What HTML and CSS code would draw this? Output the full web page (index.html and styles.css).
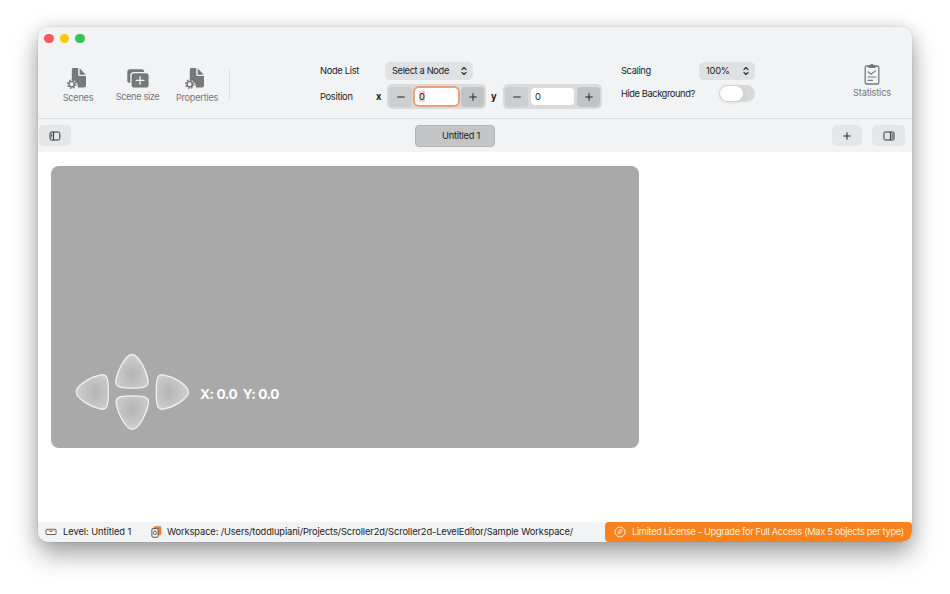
FILE: index.html
```html
<!DOCTYPE html>
<html lang="en">
<head>
    <meta charset="UTF-8">
    <meta name="viewport" content="width=device-width, initial-scale=1.0">
    <title>Untitled 1</title>
    <link rel="stylesheet" href="styles.css">
</head>
<body>
    <svg width="0" height="0" class="defs">
        <defs>
            <symbol id="doc-gear" viewBox="0 0 20 21">
                <path d="M6.500 0h4.700v6.600c0 .9.600 1.500 1.500 1.500H19v9.400c0 1.200-.8 2-2 2H10.800c.3-3.800-2.200-7-6-7.400V1.700C4.800.700 5.500 0 6.500 0z"/>
                <path d="M12.600.3l6.100 6.400h-6.100z"/>
                <circle cx="4.700" cy="16.200" r="2.700" fill="none" stroke="currentColor" stroke-width="1.700"/>
                <circle cx="4.700" cy="16.200" r="4.100" fill="none" stroke="currentColor" stroke-width="1.300" stroke-dasharray="1.610 1.610"/>
            </symbol>
            <symbol id="chevrons" viewBox="0 0 8 10">
                <path d="M1.900 3.600L4 1.500l2.100 2.100M1.900 6.400L4 8.500l2.100-2.100" fill="none" stroke="currentColor" stroke-width="1.100" stroke-linecap="round" stroke-linejoin="round"/>
            </symbol>
            <symbol id="minus" viewBox="0 0 10 10">
                <path d="M1.300 5h7.400" stroke="currentColor" stroke-width="1"/>
            </symbol>
            <symbol id="plus" viewBox="0 0 10 10">
                <path d="M1.300 5h7.400M5 1.300v7.400" stroke="currentColor" stroke-width="1"/>
            </symbol>
        </defs>
    </svg>

    <div class="window">
        <div class="titlebar">
            <span class="dot red"></span>
            <span class="dot yellow"></span>
            <span class="dot green"></span>
        </div>

        <div class="toolbar">
            <div class="tools">
                <div class="tool scenes">
                    <svg width="20" height="21"><use href="#doc-gear"/></svg>
                    <span>Scenes</span>
                </div>
                <div class="tool scene-size">
                    <svg width="22" height="19" viewBox="0 0 22 19">
                        <path d="M.3 12V3C.3 1.300 1.300.300 3 .3h11.500c1.700 0 2.600.9 2.800 2.600H7C4.600 2.900 3.300 4.200 3.300 6.600v7.300C1.300 13.900.3 13.200.3 12z"/>
                        <rect x="4.600" y="4.200" width="17" height="14.400" rx="2.600"/>
                        <path d="M13.100 7.600v7.600M9.300 11.400h7.600" stroke="#f2f3f5" stroke-width="1.300" stroke-linecap="round"/>
                    </svg>
                    <span>Scene size</span>
                </div>
                <div class="tool properties">
                    <svg width="20" height="21"><use href="#doc-gear"/></svg>
                    <span>Properties</span>
                </div>
            </div>
            <div class="separator"></div>

            <div class="form node-form">
                <div class="row">
                    <span class="label">Node List</span>
                    <div class="select">Select a Node <svg width="8" height="10"><use href="#chevrons"/></svg></div>
                </div>
                <div class="row position-row">
                    <span class="label">Position</span>
                    <span class="axis">x</span>
                    <div class="stepper">
                        <span class="step"><svg width="10" height="10"><use href="#minus"/></svg></span>
                        <span class="field focused"><mark>0</mark></span>
                        <span class="step up"><svg width="10" height="10"><use href="#plus"/></svg></span>
                    </div>
                    <span class="axis">y</span>
                    <div class="stepper">
                        <span class="step"><svg width="10" height="10"><use href="#minus"/></svg></span>
                        <span class="field">0</span>
                        <span class="step up"><svg width="10" height="10"><use href="#plus"/></svg></span>
                    </div>
                </div>
            </div>

            <div class="form view-form">
                <div class="row">
                    <span class="label">Scaling</span>
                    <div class="select">100% <svg width="8" height="10"><use href="#chevrons"/></svg></div>
                </div>
                <div class="row">
                    <span class="label wide">Hide Background?</span>
                    <div class="toggle"><span class="knob"></span></div>
                </div>
            </div>

            <div class="tool statistics">
                <svg width="16" height="22" viewBox="0 0 16 22" fill="none" stroke="currentColor" stroke-width="1.300" stroke-linecap="round" stroke-linejoin="round">
                    <rect x="1.200" y="3" width="13.600" height="18" rx="1.600"/>
                    <path d="M4.900 4.300V2.700h1.700a1.500 1.500 0 0 1 2.800 0h1.700v1.600z" fill="currentColor"/>
                    <path d="M4 8.800l3 2.400 4.600-3.300M4 14h8M4 17.400h4.600" stroke-width="1.100"/>
                </svg>
                <span>Statistics</span>
            </div>
        </div>

        <div class="tabbar">
            <div class="button sidebar">
                <svg width="12" height="10" viewBox="0 0 12 10" fill="none" stroke="currentColor" stroke-width=".9">
                    <rect x="1" y="1" width="9.800" height="8" rx="1.500"/>
                    <path d="M4.500 1v8M2.100 3h1.200M2.100 4.500h1.200M2.100 6h1.200"/>
                </svg>
            </div>
            <div class="tab">Untitled 1</div>
            <div class="actions">
                <div class="button add"><svg width="10" height="10"><use href="#plus"/></svg></div>
                <div class="button inspector">
                    <svg width="12" height="10" viewBox="0 0 12 10" fill="none" stroke="currentColor" stroke-width=".9">
                        <rect x="1" y="1" width="10" height="8" rx="1.300"/>
                        <path d="M7.400 1v8"/>
                        <path d="M8.400 3h1.700M8.400 5h1.700M8.400 7h1.700" stroke-width="1.200"/>
                    </svg>
                </div>
            </div>
        </div>

        <div class="content">
            <div class="scene">
                <svg class="dpad" width="116" height="78" viewBox="0 0 116 78">
                    <defs>
                        <radialGradient id="pad" cx=".5" cy=".6" r=".62">
                            <stop offset="0" stop-color="#b4b4b4"/>
                            <stop offset="1" stop-color="#d0d0d0"/>
                        </radialGradient>
                        <path id="arrow" d="M0-16.800C3.600-16.800 6.800-12.700 10-7.400C13-2.200 15.200 3.500 16.100 9C16.800 13.500 15 15.200 11 16C6 17-6 17-11 16C-15 15.200-16.800 13.500-16.100 9C-15.200 3.500-13-2.200-10-7.400C-6.800-12.700-3.600-16.800 0-16.800z"/>
                    </defs>
                    <g fill="url(#pad)" stroke="#f1f1f1" stroke-width="1.300">
                        <use href="#arrow" transform="translate(58 18.300)"/>
                        <use href="#arrow" transform="translate(58.300 59.600) rotate(180)"/>
                        <use href="#arrow" transform="translate(18.300 39) rotate(-90) scale(1.060 .96)"/>
                        <use href="#arrow" transform="translate(98.300 39) rotate(90) scale(1.060 .96)"/>
                    </g>
                </svg>
                <span class="coords">X: 0.0&nbsp; Y: 0.0</span>
            </div>
        </div>

        <div class="statusbar">
            <svg class="level-icon" width="12" height="8" viewBox="0 0 12 8">
                <rect x="1" y="1.300" width="10" height="5.200" rx=".8" fill="#fff" stroke="#4b4b4b" stroke-width=".9"/>
                <path d="M1.500 2h9" stroke="#e98b3c" stroke-width=".9"/>
                <path d="M4.500 3.300h3" stroke="#4b4b4b" stroke-width="1"/>
            </svg>
            <span class="level">Level: Untitled 1</span>
            <svg class="workspace-icon" width="11" height="12" viewBox="0 0 11 12">
                <rect x="3" y=".3" width="7.300" height="9" rx="1.200" fill="#f28128"/>
                <rect x=".9" y="2.400" width="6.200" height="8.900" rx="1.200" fill="#f4f3f2" stroke="#444" stroke-width=".9"/>
                <circle cx="4" cy="7" r="1.600" fill="none" stroke="#555" stroke-width=".8"/>
                <path d="M2.500 4.300h2.400" stroke="#777" stroke-width=".6"/>
            </svg>
            <span class="path">Workspace: /Users/toddlupiani/Projects/Scroller2d/Scroller2d-LevelEditor/Sample Workspace/</span>
            <div class="license">
                <svg width="12" height="12" viewBox="0 0 12 12" fill="none" stroke="#fff0d8" stroke-width="1">
                    <circle cx="6" cy="6" r="5"/>
                    <path d="M4 8.800L4.300 5.500C5 4 6.400 3.500 8 3.300C8 5 7.500 6.600 6.200 7.400L4.800 7.500L7 4.600" stroke-width=".8"/>
                </svg>
                <span>Limited License - Upgrade for Full Access (Max 5 objects per type)</span>
            </div>
        </div>
    </div>
</body>
</html>
```
FILE: styles.css
```css
* {
    box-sizing: border-box;
}

body {
    margin: 0;
    height: 594px;
    padding: 27px 38px 0;
    overflow: hidden;
    background: #fff;
    font-family: Inter, "Liberation Sans", sans-serif;
    font-size: 9.3px;
    line-height: 12px;
    letter-spacing: -0.11px;
    color: #222;
}

svg {
    display: block;
    flex: none;
}

.defs {
    position: absolute;
}

.window {
    display: flex;
    flex-direction: column;
    width: 874px;
    height: 515px;
    border-radius: 10px;
    background: #fff;
    overflow: hidden;
    white-space: nowrap;
    box-shadow: 0 0 1px rgba(0,0,0,0.35), 0 0 16px rgba(0,0,0,0.1), 0 12px 26px rgba(0,0,0,0.36);
}

.titlebar {
    display: flex;
    gap: 6px;
    height: 32px;
    padding: 6.5px 0 0 6px;
    background: #f2f3f5;
}

.dot {
    width: 9.6px;
    height: 9.6px;
    border-radius: 50%;
}

.red { background: #fb5a5c; }
.yellow { background: #f9c60c; }
.green { background: #31c456; }

.toolbar {
    display: flex;
    height: 60px;
    background: #f2f3f5;
    border-bottom: 1px solid #dfe0e2;
}

.tools {
    display: flex;
    padding-left: 15px;
}

.tool {
    display: flex;
    flex-direction: column;
    align-items: center;
    color: #77787a;
    fill: currentColor;
    font-size: 9.2px;
    letter-spacing: -0.25px;
}

.scenes,
.properties {
    width: 50px;
    padding-top: 9px;
    gap: 3px;
}

.scenes svg {
    margin-right: 2px;
}

.properties svg {
    margin-right: 4px;
}

.scene-size {
    width: 69px;
    padding-top: 10px;
    gap: 3px;
    letter-spacing: -0.35px;
}

.separator {
    width: 1px;
    height: 30px;
    margin: 11px 0 0 7px;
    background: #dcdddf;
}

.form {
    display: flex;
    flex-direction: column;
    letter-spacing: -0.35px;
}

.node-form {
    width: 282px;
    margin-left: 90px;
    padding-top: 3px;
    gap: 4px;
}

.row {
    display: flex;
    align-items: center;
}

.label {
    width: 65px;
}

.node-form .label {
    letter-spacing: -0.3px;
}

.node-form .position-row .label {
    width: 56px;
    letter-spacing: -0.3px;
}

.select {
    display: flex;
    align-items: center;
    justify-content: space-between;
    width: 88px;
    height: 18px;
    padding: 0 5px 0 7px;
    border-radius: 5px;
    background: #e0e1e3;
}

.axis {
    width: 11px;
    font-weight: 700;
}

.stepper {
    display: flex;
    align-items: center;
    gap: 3px;
    width: 99px;
    height: 25px;
    padding: 2px;
    border-radius: 5px;
    background: #d9dadc;
}

.stepper + .axis {
    width: 12px;
    margin-left: 5px;
}

.step {
    display: flex;
    align-items: center;
    justify-content: center;
    width: 23px;
    height: 20px;
    border-radius: 4px;
    background: #cdced0;
}

.step.up {
    background: #c2c3c5;
}

.field {
    width: 43px;
    height: 17px;
    padding: 3px 4px;
    border-radius: 4px;
    background: #fff;
}

.focused {
    box-shadow: 0 0 0 2px #e4a27b;
}

mark {
    background: #f8d6bd;
    color: inherit;
}

.view-form {
    width: 134px;
    margin-left: 19px;
    padding-top: 3px;
    gap: 5px;
}

.view-form .label {
    width: 78px;
}

.view-form .select {
    width: 56px;
    letter-spacing: -0.25px;
}

.view-form .label.wide {
    width: 98px;
    letter-spacing: -0.42px;
}

.toggle {
    width: 36px;
    height: 17px;
    padding: 1px;
    border-radius: 9px;
    background: #d8d9db;
}

.knob {
    display: block;
    width: 23px;
    height: 15px;
    border-radius: 8px;
    background: #fff;
    box-shadow: 0 1px 5px rgba(0,0,0,0.1);
}

.statistics {
    margin: 4px 21px 0 auto;
    gap: 2px;
    letter-spacing: -0.15px;
}

.tabbar {
    display: flex;
    align-items: center;
    height: 33px;
    padding: 0 7px 0 1px;
    background: #f2f3f5;
}

.button {
    display: flex;
    align-items: center;
    justify-content: center;
    width: 33px;
    height: 21px;
    border-radius: 5px;
    background: #e5e6e7;
}

.sidebar {
    width: 32px;
}

.tab {
    width: 80px;
    height: 22px;
    margin-left: 344px;
    padding: 4px 0 0 26px;
    border: 1px solid #b2b3b5;
    border-radius: 4px;
    background: #c4c5c7;
    letter-spacing: -0.25px;
}

.actions {
    display: flex;
    gap: 10px;
    margin-left: auto;
}

.add {
    width: 30px;
}

.content {
    flex: 1;
    padding: 14px 13px;
}

.scene {
    display: flex;
    align-items: flex-start;
    width: 588px;
    height: 282px;
    padding: 187px 0 0 23px;
    border-radius: 8px;
    background: #a9a9a9;
}

.coords {
    margin: 32px 0 0 10px;
    font-size: 13.6px;
    font-weight: 700;
    line-height: 18px;
    letter-spacing: -0.45px;
    color: #fff;
}

.statusbar {
    display: flex;
    align-items: center;
    height: 20px;
    padding-left: 7px;
    background: #f2f3f5;
}

.level {
    width: 82px;
    margin-left: 6px;
    letter-spacing: -0.04px;
}

.workspace-icon {
    margin-left: 6px;
}

.path {
    margin-left: 5px;
}

.license {
    display: flex;
    align-items: center;
    gap: 6px;
    width: 307px;
    height: 20px;
    margin-left: auto;
    padding-left: 9px;
    border-radius: 4px 4px 10px 4px;
    background: #f8821e;
    color: #fff0d8;
    letter-spacing: -0.34px;
}
```
